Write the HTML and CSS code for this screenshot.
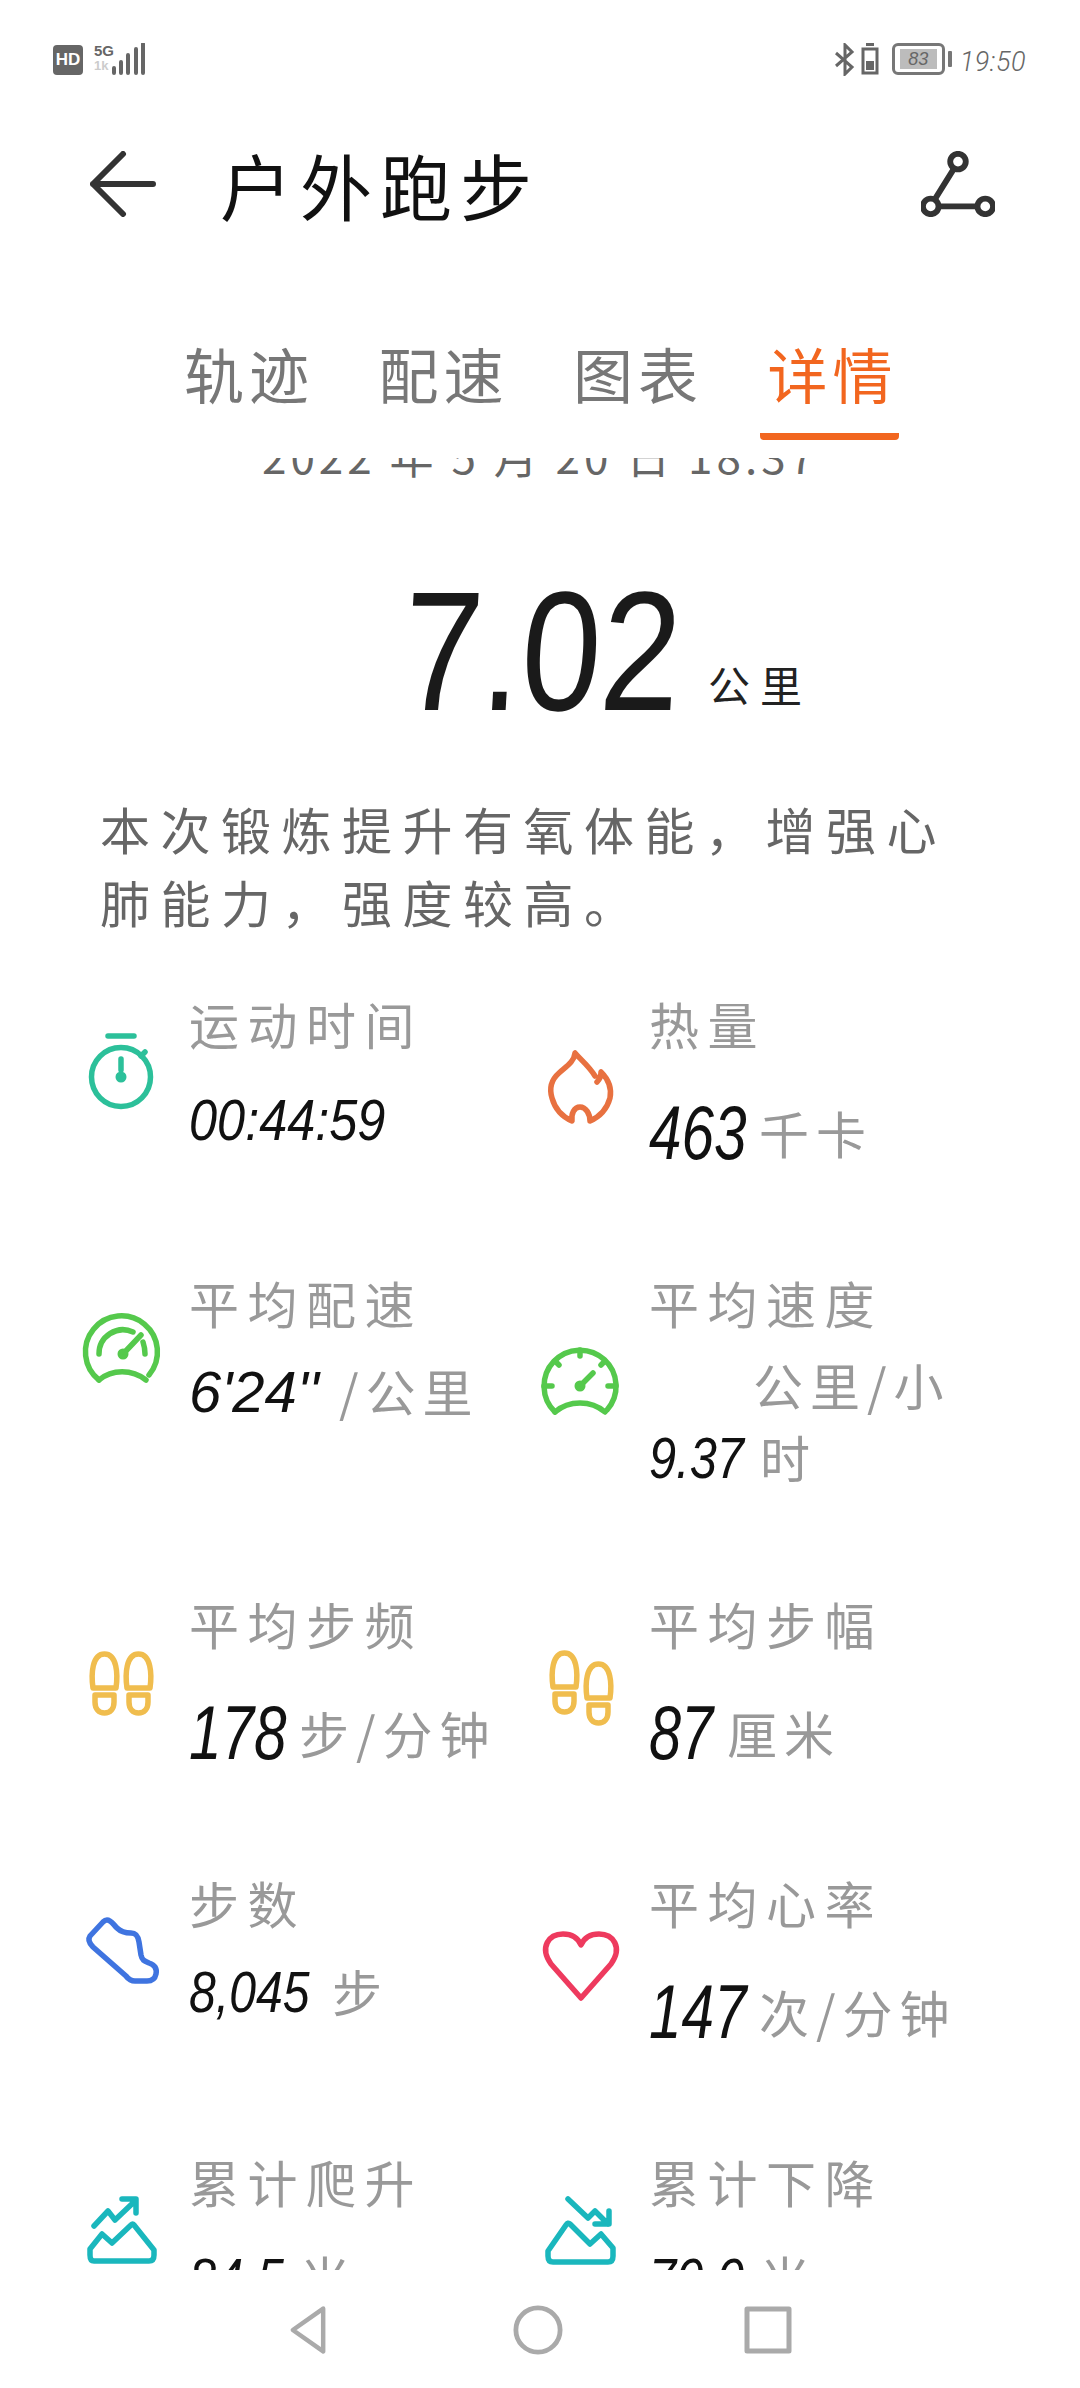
FILE: index.html
```html
<!DOCTYPE html>
<html lang="zh-CN">
<head>
<meta charset="utf-8">
<title>户外跑步</title>
<link rel="stylesheet" href="styles.css">
</head>
<body>
<div class="app">
  <div class="status">
    <div class="status-left">
      <span class="hd">HD</span>
      <span class="net"><span class="net-5g">5G</span><span class="net-1k">1k</span></span>
      <svg class="signal" viewBox="0 0 36 32"><path d="M3 25v5M10 19v11M17 12v18M25 6v24M32 1v29"/></svg>
    </div>
    <div class="status-right">
      <svg class="bt" viewBox="0 0 20 33"><path d="M1 10l16 14-7 7V2l7 7L1 23"/></svg>
      <svg class="minibat" viewBox="0 0 20 32"><path class="mb-o" d="M6 1.5h8M3 6h14v24H3z"/><path class="mb-f" d="M6 18h8v9H6z"/></svg>
      <span class="bat"><span class="bat-fill">83</span></span>
      <span class="bat-nub"></span>
      <span class="clock">19:50</span>
    </div>
  </div>

  <header class="top">
    <svg class="back" viewBox="0 0 70 66"><path d="M33 3L3 33l30 30M3 33h60"/></svg>
    <h1 class="title">户外跑步</h1>
    <svg class="share" viewBox="0 0 76 66"><circle cx="38" cy="10" r="8"/><circle cx="10" cy="56" r="8"/><circle cx="66" cy="56" r="8"/><path d="M34 17L14 49M18 56h40"/></svg>
  </header>

  <nav class="tabs">
    <a class="tab">轨迹</a>
    <a class="tab">配速</a>
    <a class="tab">图表</a>
    <a class="tab active">详情</a>
  </nav>

  <main class="scroll">
    <div class="scroll-inner">
      <p class="date">2022 年 5 月 20 日 18:37</p>
      <div class="distance"><span class="dist-num">7.02</span><span class="dist-unit">公里</span></div>
      <p class="desc">本次锻炼提升有氧体能&#65292;增强心肺能力&#65292;强度较高。</p>

      <div class="grid">
        <div class="cell">
          <svg class="icon c-teal" viewBox="0 4 80 80"><path d="M27 6h26M60 26l4-4M40 29v11"/><circle cx="40" cy="47" r="29.500"/><circle class="dot" cx="40" cy="47" r="3"/></svg>
          <div class="info"><div class="label">运动时间</div><div class="value time"><b class="num n-time">00:44:59</b></div></div>
        </div>
        <div class="cell">
          <svg class="icon c-orange" viewBox="0 0 80 80"><path d="M54 30C48 20 40 14 34 7C33 16 26 20 18 27C10 34 8 42 11 52C14 63 22 71 31 75C30 68 33 61 39 61C45 61 49 68 49 75C58 71 66 63 69 52C71 42 67 33 60 26C60 30 58 34 56 36"/></svg>
          <div class="info"><div class="label">热量</div><div class="value big"><b class="num n-3">463</b>千卡</div></div>
        </div>

        <div class="cell">
          <svg class="icon c-green" viewBox="-1 -3 80 80"><path d="M17 68A36 36 0 1 1 67 63"/><path d="M17 68C30 57 50 57 64 68"/><path d="M17 42A24 24 0 0 1 51 20M61 30Q63 36 63 42M41 42L59 23"/><circle class="dot" cx="41" cy="42" r="3"/></svg>
          <div class="info"><div class="label">平均配速</div><div class="value"><b class="num n-pace">6'24''</b>/公里</div></div>
        </div>
        <div class="cell wrapped">
          <svg class="icon c-green" viewBox="0 0 80 80"><path d="M14 70A36 36 0 1 1 66 68"/><path d="M14 70C28 58 50 58 64 70"/><path d="M39 8v6M14 19l4 4M64 19l-4 4M3 44h8M75 44h-8M39 44L52 31"/><circle class="dot" cx="39" cy="44" r="3"/></svg>
          <div class="info"><div class="label">平均速度</div><div class="value wrap-top">公里/小</div><div class="value wrap-bottom"><b class="num n-dec">9.37</b>时</div></div>
        </div>

        <div class="cell">
          <svg class="icon c-yellow" viewBox="0 2 80 80"><path d="M12 44C10 30 11 10 23.500 10C36 10 37 30 35 44ZM14 51H33V58C33 65 29 69 23.500 69C18 69 14 65 14 58ZM46 44C44 30 45 10 57.500 10C70 10 71 30 69 44ZM48 51H67V58C67 65 63 69 57.500 69C52 69 48 65 48 58Z"/></svg>
          <div class="info"><div class="label">平均步频</div><div class="value big"><b class="num n-3">178</b>步/分钟</div></div>
        </div>
        <div class="cell">
          <svg class="icon c-yellow" viewBox="0 -2 80 80"><path d="M12 39C10 25 11 5 23.500 5C36 5 37 25 35 39ZM14 46H33V53C33 60 29 64 23.500 64C18 64 14 60 14 53ZM46 50C44 36 45 16 57.500 16C70 16 71 36 69 50ZM48 57H67V64C67 71 63 75 57.500 75C52 75 48 71 48 64Z"/></svg>
          <div class="info"><div class="label">平均步幅</div><div class="value big"><b class="num n-2">87</b>厘米</div></div>
        </div>

        <div class="cell">
          <svg class="icon c-blue" viewBox="0 0 80 80"><path d="M26 11C30 11 32 15 36 19C40 23 45 24 50 24C55 24 57 27 58 33L60 46C61 51 63 52 68 54C74 56 76 60 75 65C74 70 71 72 66 72H54C50 72 48 71 45 67L12 38C8 34 7 30 9 27L22 13C23 12 25 11 26 11Z"/></svg>
          <div class="info"><div class="label">步数</div><div class="value"><b class="num n-steps">8,045</b>步</div></div>
        </div>
        <div class="cell">
          <svg class="icon c-red" viewBox="0 3 80 80"><path d="M40 76L10 42C-2 25 8 12 22 12C31 12 37 16 40 23C43 16 49 12 58 12C72 12 82 25 70 42Z"/></svg>
          <div class="info"><div class="label">平均心率</div><div class="value big"><b class="num n-3">147</b>次/分钟</div></div>
        </div>

        <div class="cell">
          <svg class="icon c-cyan" viewBox="0 0 80 80"><path d="M13 69H68Q73 69 73 63V58L53 33Q52 31 50 33L31 51L21 42L9 57V63Q9 69 13 69ZM13 34L27 19L34 28L54 9M41 7H55V21"/></svg>
          <div class="info"><div class="label">累计爬升</div><div class="value low"><b class="num n-dec">84.5</b>米</div></div>
        </div>
        <div class="cell">
          <svg class="icon c-cyan" viewBox="0 0 80 80"><path d="M12 70H67Q72 70 72 64V56L60 42L49 52L29 32Q27 30 25 33L7 59V64Q7 70 12 70ZM27 7L47 26L54 19L67 32M54 32H68V19"/></svg>
          <div class="info"><div class="label">累计下降</div><div class="value low"><b class="num n-dec">70.0</b>米</div></div>
        </div>
      </div>
    </div>
  </main>

  <footer class="navbar">
    <svg class="nav-icon nav-tri" viewBox="0 0 44 56"><path d="M39 4L5 28l34 24z"/></svg>
    <svg class="nav-icon" viewBox="0 0 52 52"><circle cx="26" cy="26" r="23"/></svg>
    <svg class="nav-icon" viewBox="0 0 50 50"><path d="M4 4h42v42H4z"/></svg>
  </footer>
</div>
</body>
</html>
```

FILE: styles.css
```css
* { box-sizing: border-box; }
html, body { margin: 0; padding: 0; background: #fff; }
body { font-family: "Noto Sans CJK SC", "Noto Sans", sans-serif; }
.app { width: 1080px; height: 2388px; display: flex; flex-direction: column; overflow: hidden; background: #fff; }

/* status bar */
.status { height: 136px; padding: 43px 54px 0 53px; display: flex; justify-content: space-between; align-items: flex-start; color: #666; flex: none; }
.status-left, .status-right { display: flex; align-items: flex-start; }
.hd { width: 30px; height: 30px; margin-top: 2px; border-radius: 4px; background: #666; color: #fff; font: 700 17px/30px "Liberation Sans", sans-serif; text-align: center; }
.net { width: 20px; margin-left: 11px; display: flex; flex-direction: column; }
.net-5g { font: 700 15px/15px "Liberation Sans", sans-serif; color: #666; }
.net-1k { font: 700 13px/15px "Liberation Sans", sans-serif; color: #ccc; }
.signal { width: 36px; height: 32px; margin-left: -3px; fill: none; stroke: #666; stroke-width: 4; stroke-linecap: round; }
.bt { width: 20px; height: 33px; fill: none; stroke: #666; stroke-width: 3; }
.minibat { width: 20px; height: 32px; margin-left: 5px; }
.mb-o { fill: none; stroke: #666; stroke-width: 3; }
.mb-f { fill: #666; }
.bat { width: 53px; height: 32px; margin-left: 12px; padding: 3px 5px; border: 3px solid #777; border-radius: 6px; }
.bat-fill { display: block; width: 37px; height: 20px; background: #bcbcbc; color: #666; font: italic 18px/20px "Liberation Sans", sans-serif; text-align: center; }
.bat-nub { width: 4px; height: 16px; margin: 8px 0 0 3px; background: #777; border-radius: 1px; }
.clock { margin: 4px 0 0 8px; font: italic 300 27px/30px Roboto, sans-serif; letter-spacing: 0.500px; color: #666; }

/* title row */
.top { height: 96px; flex: none; padding: 0 85px 0 90px; display: flex; align-items: center; }
.back { width: 70px; height: 66px; flex: none; fill: none; stroke: #333; stroke-width: 6; stroke-linecap: round; stroke-linejoin: round; }
.title { margin: 0 0 0 60px; flex: 1; font-size: 72px; line-height: 96px; font-weight: 400; letter-spacing: 8px; color: #111; white-space: nowrap; }
.share { width: 74px; height: 66px; flex: none; fill: none; stroke: #333; stroke-width: 6; }

/* tabs */
.tabs { flex: none; height: 226px; padding: 98px 0 0 176px; display: flex; gap: 55.500px; align-items: flex-start; }
.tab { display: block; width: 139px; height: 110px; padding: 5px 0 0 8px; font-size: 60px; line-height: 76px; letter-spacing: 5px; color: #777; white-space: nowrap; }
.tab.active { color: #f2661f; border-bottom: 7px solid #f2661f; border-radius: 0 0 4px 4px; }

/* scrolling content */
.scroll { flex: 1; min-height: 0; overflow: hidden; }
.scroll-inner { margin-top: -27px; }
.date { margin: 0; height: 48px; font-size: 44px; line-height: 48px; letter-spacing: 4px; text-align: center; color: #666; white-space: nowrap; }
.distance { margin: 87px 0 0 398px; display: flex; align-items: flex-end; height: 170px; }
.dist-num { display: inline-block; width: 290px; font: 400 170px/170px "Liberation Sans", sans-serif; color: #1a1a1a; transform: scaleX(0.840) skewX(-4deg); transform-origin: left bottom; }
.dist-unit { margin: 0 0 27px 20px; font-size: 42px; line-height: 50px; letter-spacing: 10px; color: #222; }
.desc { margin: 56px 120px 0 100px; font-size: 50px; line-height: 73px; letter-spacing: 10.500px; color: #666; }

/* stat grid */
.grid { margin: 55px 0 0 81px; display: grid; grid-template-columns: 460px 1fr; column-gap: 0; row-gap: 94px; align-items: start; }
.cell { display: flex; align-items: center; }
.cell.wrapped { margin-bottom: 7px; }
.icon { width: 80px; height: 80px; flex: none; overflow: visible; fill: none; stroke-width: 5.500; stroke-linecap: round; stroke-linejoin: round; }
.dot { stroke-width: 5; }
.c-teal { stroke: #2cc09a; }
.c-teal .dot { fill: #2cc09a; }
.c-orange { stroke: #e87140; }
.c-green { stroke: #55c94c; }
.c-green .dot { fill: #55c94c; }
.c-yellow { stroke: #f0bd4e; }
.c-blue { stroke: #3f74e0; }
.c-red { stroke: #ee3a5e; }
.c-cyan { stroke: #1ab7bd; }
.info { margin-left: 28px; flex: 1; min-width: 0; }
.label { font-size: 50px; line-height: 60px; letter-spacing: 8.500px; color: #999; white-space: nowrap; }
.value { margin-top: 22px; font-size: 50px; line-height: 72px; letter-spacing: 7px; color: #999; white-space: nowrap; }
.value.time { margin-top: 29px; }
.value.low { margin-top: 30px; }
.value.big { margin-top: 33px; line-height: 92px; }
.value.wrap-top { margin-top: 16px; padding-left: 104px; }
.value.wrap-bottom { margin-top: 0; }
.num { display: inline-block; margin-right: 16px; font: italic 400 58px/1 "Liberation Sans", sans-serif; letter-spacing: 0; color: #111; white-space: nowrap; transform-origin: left center; }
.big .num { font-size: 76px; vertical-align: -5px; }
.n-time { width: 197px; transform: scaleX(0.870); }
.n-pace { width: 134px; }
.n-dec { width: 95px; transform: scaleX(0.840); }
.n-steps { width: 120px; transform: scaleX(0.830); margin-right: 23px; }
.n-3 { width: 94px; transform: scaleX(0.770); }
.n-2 { width: 62px; transform: scaleX(0.760); }

/* navigation bar */
.navbar { height: 118px; flex: none; padding: 35px 0 0 283px; display: flex; align-items: flex-start; gap: 180px; }
.nav-icon { width: 50px; height: 50px; flex: none; fill: none; stroke: #aaa; stroke-width: 5; stroke-linejoin: round; overflow: visible; }
```
